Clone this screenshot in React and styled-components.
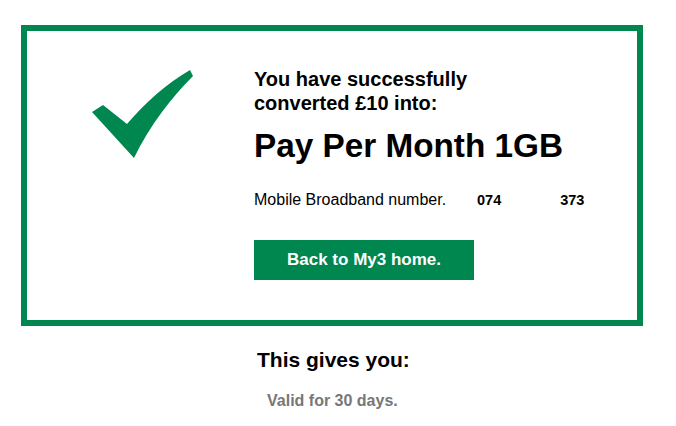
import React from "react";
import styled, { createGlobalStyle } from "styled-components";

const GlobalStyle = createGlobalStyle`
  body {
    margin: 0;
    background: #fff;
    font-family: "Liberation Sans", Arial, sans-serif;
    color: #000;
  }
`;

const Page = styled.div`
  padding: 25px 33px 0 21px;
`;

const SuccessBox = styled.div`
  border: 6px solid #00864f;
  box-sizing: border-box;
  height: 301px;
  display: flex;
  padding: 36px 0 0 63px;
`;

const Tick = styled.svg`
  width: 106px;
  height: 94px;
  flex: none;
`;

const Details = styled.div`
  margin-left: 58px;
  display: flex;
  flex-direction: column;
  align-items: flex-start;
`;

const Lead = styled.h2`
  margin: 0;
  font-size: 20px;
  line-height: 24px;
  font-weight: bold;
`;

const Plan = styled.h1`
  margin: 11px 0 0;
  font-size: 33.3px;
  line-height: 40px;
  font-weight: bold;
`;

const NumberRow = styled.div`
  margin-top: 24px;
  display: flex;
  align-items: baseline;
  font-size: 16px;
  line-height: 20px;
`;

const Label = styled.span`
  width: 223px;
  flex: none;
`;

const Digits = styled.span`
  font-weight: bold;
  font-size: 14.5px;
  white-space: nowrap;
  margin-left: ${(p) => p.gap || 0}px;
`;

const HomeButton = styled.button`
  margin-top: 30px;
  width: 220px;
  height: 40px;
  border: none;
  background: #00864f;
  color: #fff;
  font-family: "Liberation Sans", Arial, sans-serif;
  font-size: 17px;
  font-weight: bold;
  cursor: pointer;
`;

const Summary = styled.div`
  padding-left: 236px;
  padding-top: 21px;
`;

const SummaryTitle = styled.h3`
  margin: 0;
  font-size: 21px;
  line-height: 26px;
  font-weight: bold;
`;

const Validity = styled.p`
  margin: 19px 0 0 10px;
  font-size: 16px;
  font-weight: bold;
  color: #777;
`;

export default function App() {
  return (
    <>
      <GlobalStyle />
      <Page>
        <SuccessBox>
          <Tick viewBox="0 0 106 94">
            <path
              d="M2 45 L13 38 L37 57 C56 35 76 17 100 3 L103 9 C82 30 60 58 44 91 Z"
              fill="#00864f"
            />
          </Tick>
          <Details>
            <Lead>
              You have successfully
              <br />
              converted £10 into:
            </Lead>
            <Plan>Pay Per Month 1GB</Plan>
            <NumberRow>
              <Label>Mobile Broadband number.</Label>
              <Digits>074</Digits>
              <Digits gap={59}>373</Digits>
            </NumberRow>
            <HomeButton>Back to My3 home.</HomeButton>
          </Details>
        </SuccessBox>
        <Summary>
          <SummaryTitle>This gives you:</SummaryTitle>
          <Validity>Valid for 30 days.</Validity>
        </Summary>
      </Page>
    </>
  );
}
